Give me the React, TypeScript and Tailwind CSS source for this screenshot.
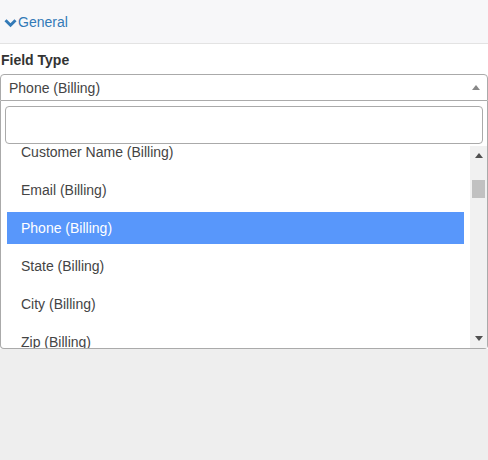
import React from 'react';

const options = [
  'Customer Name (Billing)',
  'Email (Billing)',
  'Phone (Billing)',
  'State (Billing)',
  'City (Billing)',
  'Zip (Billing)',
];

export default function App() {
  const selected = 'Phone (Billing)';

  return (
    <div className="w-[488px] h-[460px] bg-[#eeeeee] flex flex-col" style={{ fontFamily: '"Liberation Sans", Arial, sans-serif' }}>
      <div className="h-[44px] bg-[#f7f7f9] border-b border-[#e3e3e3] flex items-center px-[4px] shrink-0">
        <svg width="13" height="10" viewBox="0 0 13 10" className="mt-[2px]">
          <path d="M1.5 2.2 L6.5 7.2 L11.5 2.2" fill="none" stroke="#337ab7" strokeWidth="3" />
        </svg>
        <span className="text-[14px] text-[#337ab7] ml-[1px] mt-[1px]">General</span>
      </div>

      <div className="bg-white pt-[8px]">
        <div className="text-[14px] font-bold text-[#333] pl-[1px] leading-[16px] mb-[6px]">Field Type</div>

        <div className="border border-[#aaaaaa] rounded-t-[4px] h-[27px] flex items-center pl-[8px] pr-[6px]">
          <span className="flex-1 text-[14px] text-[#444] mt-[1px]">{selected}</span>
          <svg width="8" height="5" viewBox="0 0 8 5" className="mr-[1px]">
            <path d="M0 5 L4 0 L8 5 Z" fill="#888" />
          </svg>
        </div>

        <div className="border border-t-0 border-[#aaaaaa] rounded-b-[4px] flex flex-col">
          <div className="px-[4px] pt-[5px] pb-[2px]">
            <div className="h-[38px] border border-[#aaaaaa] rounded-[4px] bg-white" />
          </div>
          <div className="flex h-[202px]">
            <div className="flex-1 overflow-hidden">
              <div className="-mt-[13px] flex flex-col">
                {options.map(o => (
                  <div key={o} className="h-[38px] py-[3px] pl-[6px] pr-[6px]">
                    <div
                      className={
                        o === selected
                          ? 'h-[32px] flex items-center pl-[14px] text-[14px] bg-[#5897fb] text-white'
                          : 'h-[32px] flex items-center pl-[14px] text-[14px] text-[#444]'
                      }
                    >
                      {o}
                    </div>
                  </div>
                ))}
              </div>
            </div>
            <div className="w-[17px] bg-[#f1f1f1] flex flex-col items-center">
              <svg width="8" height="5" viewBox="0 0 8 5" className="mt-[7px]">
                <path d="M0 5 L4 0 L8 5 Z" fill="#505050" />
              </svg>
              <div className="w-[13px] h-[18px] bg-[#c1c1c1] mt-[22px]" />
              <div className="flex-1" />
              <svg width="8" height="5" viewBox="0 0 8 5" className="mb-[7px]">
                <path d="M0 0 L4 5 L8 0 Z" fill="#505050" />
              </svg>
            </div>
          </div>
        </div>
      </div>
    </div>
  );
}
